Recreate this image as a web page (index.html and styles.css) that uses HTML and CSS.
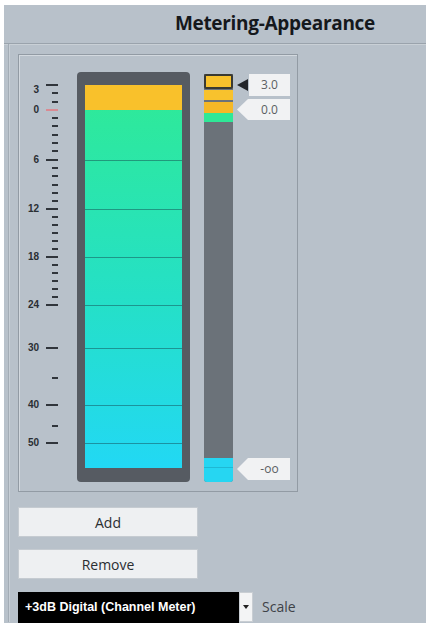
FILE: index.html
```html
<!DOCTYPE html>
<html lang="en">
  <head>
    <meta charset="UTF-8" />
    <meta name="viewport" content="width=device-width, initial-scale=1.0" />
    <title>Metering-Appearance</title>
    <link rel="stylesheet" href="styles.css">
  </head>
  <body>
    <div class="app">
      <div class="title">Metering-Appearance</div>
      <div class="content">
        <div class="frame">
          <div class="scale" id="scale"></div>
          <div class="meter">
            <div class="fill" id="fill">
              <div class="fill-top"></div>
            </div>
          </div>
          <div class="strip">
            <div class="seg seg-peak"></div>
            <div class="seg seg-yellow"></div>
            <div class="seg seg-orange"></div>
            <div class="seg seg-green"></div>
            <div class="seg-empty"></div>
            <div class="seg seg-cyan"></div>
          </div>
          <div class="tags">
            <div class="tag tag-first">
              <span class="pointer"></span>
              <span class="tag-box">3.0</span>
            </div>
            <div class="tag tag-arrow">0.0</div>
            <div class="tag tag-arrow tag-bottom">-oo</div>
          </div>
        </div>
        <button class="btn btn-add" type="button">Add</button>
        <button class="btn" type="button">Remove</button>
        <div class="select-row">
          <div class="select">+3dB Digital (Channel Meter)</div>
          <div class="select-arrow"><span></span></div>
          <span class="select-label">Scale</span>
        </div>
      </div>
    </div>
    <script>
// tick positions in px from the top of the scale column
const ticks = [
  { y: 30, major: true, label: "3", labelY: 35 },
  { y: 38 }, { y: 47 },
  { y: 55, major: true, label: "0", red: true },
  { y: 63 }, { y: 71 }, { y: 80 }, { y: 88 }, { y: 96 },
  { y: 105, major: true, label: "6" },
  { y: 113 }, { y: 121 }, { y: 130 }, { y: 138 }, { y: 146 },
  { y: 154, major: true, label: "12" },
  { y: 162 }, { y: 170 }, { y: 178 }, { y: 186 }, { y: 194 },
  { y: 202, major: true, label: "18" },
  { y: 210 }, { y: 218 }, { y: 226 }, { y: 234 }, { y: 242 },
  { y: 250, major: true, label: "24" },
  { y: 293, major: true, label: "30" },
  { y: 323 },
  { y: 350, major: true, label: "40" },
  { y: 371 },
  { y: 388, major: true, label: "50" }
];

const scale = document.getElementById("scale");
ticks.forEach((t) => {
  const tick = document.createElement("div");
  tick.className = "tick" + (t.major ? " major" : "") + (t.red ? " red" : "");
  tick.style.top = t.y + "px";
  scale.appendChild(tick);
  if (t.label) {
    const lab = document.createElement("div");
    lab.className = "tick-label";
    lab.textContent = t.label;
    lab.style.top = (t.labelY || t.y) + "px";
    scale.appendChild(lab);
  }
});

// horizontal lines in the meter, px from the top of the fill
const lines = [75, 124, 172, 220, 263, 320, 358];
const fill = document.getElementById("fill");
lines.forEach((y) => {
  const line = document.createElement("div");
  line.className = "fill-line";
  line.style.top = y + "px";
  fill.appendChild(line);
});
    </script>
  </body>
</html>
```

FILE: styles.css
```css
body {
  margin: 0;
  padding: 0;
  background: #fff;
  height: 623px;
  overflow: hidden;
}

.app {
  margin: 5px 0 0 4px;
  height: 618px;
  background: #b8c1ca;
  font-family: "Open Sans", "Liberation Sans", sans-serif;
}

.title {
  height: 39px;
  box-sizing: border-box;
  padding: 5px 51px 0 0;
  text-align: right;
  font-size: 19px;
  font-weight: 700;
  color: #15181c;
  letter-spacing: -0.3px;
  border-bottom: 1px solid #9aa3ac;
  box-shadow: 0 1px 0 #c9d0d6;
}

.content {
  margin-left: 4px;
  height: 578px;
  border-left: 1px solid #a3acb5;
  box-shadow: inset 1px 0 0 #c8cfd6;
  padding: 10px 0 0 9px;
  box-sizing: border-box;
}

.frame {
  width: 280px;
  height: 438px;
  box-sizing: border-box;
  border: 1px solid #929ba4;
  box-shadow: inset 1px 1px 0 #d3d9df;
  display: flex;
  padding-top: 17px;
}

/* scale */
.scale {
  position: relative;
  width: 58px;
  margin-top: -17px;
}
.tick {
  position: absolute;
  left: 33px;
  width: 6px;
  height: 2px;
  margin-top: -1px;
  background: #30353b;
}
.tick.major {
  left: 27px;
  width: 12px;
}
.tick.red {
  background: #d98a92;
}
.tick-label {
  position: absolute;
  left: 0;
  width: 20px;
  text-align: right;
  font-family: "Liberation Sans", sans-serif;
  font-weight: 700;
  font-size: 10px;
  line-height: 10px;
  margin-top: -5px;
  color: #2a2e33;
}

/* big meter */
.meter {
  width: 113px;
  height: 410px;
  box-sizing: border-box;
  padding: 13px 8px 14px;
  background: #565b62;
  border-radius: 4px;
}
.fill {
  position: relative;
  height: 100%;
  background: linear-gradient(#2fea96, #25e0c6 55%, #22d8f4);
}
.fill-top {
  height: 25px;
  background: #f9c12b;
}
.fill-line {
  position: absolute;
  left: 0;
  right: 0;
  height: 1px;
  background: rgba(20, 60, 70, 0.45);
}

/* small strip */
.strip {
  width: 29px;
  height: 408px;
  margin: 2px 0 0 14px;
  background: #6b7279;
  display: flex;
  flex-direction: column;
  border-radius: 0 0 3px 3px;
  overflow: hidden;
}
.seg {
  flex: none;
}
.seg-peak {
  height: 15px;
  box-sizing: border-box;
  border: 2px solid #3a3a32;
  border-radius: 2px;
  background: #f8c22d;
}
.seg-yellow {
  height: 10px;
  margin-top: 1px;
  background: #f8c22d;
}
.seg-orange {
  height: 11px;
  margin-top: 2px;
  background: #f5b826;
}
.seg-green {
  height: 9px;
  background: #2fe897;
}
.seg-empty {
  flex: 1;
}
.seg-cyan {
  height: 24px;
  background: linear-gradient(#26d6f2 0 9px, #1fb9d4 9px 10px, #26d6f2 10px);
}

/* value tags */
.tags {
  position: relative;
  width: 53px;
  margin-left: 4px;
}
.tag {
  position: absolute;
  left: 0;
  width: 53px;
  height: 21px;
  font-size: 12px;
  line-height: 21px;
  color: #5a5e62;
}
.tag-first {
  top: 2px;
  height: 22px;
  display: flex;
  align-items: center;
}
.pointer {
  width: 0;
  height: 0;
  border-top: 6px solid transparent;
  border-bottom: 6px solid transparent;
  border-right: 11px solid #23262a;
  margin-right: 1px;
}
.tag-box {
  width: 41px;
  height: 22px;
  line-height: 22px;
  background: #f1f2f3;
  text-align: center;
}
.tag-arrow {
  top: 27px;
  background: #f1f2f3;
  clip-path: polygon(11px 0, 100% 0, 100% 100%, 11px 100%, 0 50%);
  box-sizing: border-box;
  padding-left: 12px;
  text-align: center;
}
.tag-bottom {
  top: 386px;
  height: 22px;
  line-height: 22px;
}

/* buttons */
.btn {
  display: block;
  width: 180px;
  height: 30px;
  margin-top: 12px;
  padding: 0;
  border: 1px solid #c5cbd1;
  background: #eef0f2;
  font-family: "Open Sans", "Liberation Sans", sans-serif;
  font-size: 14px;
  color: #2b2e31;
}
.btn-add {
  margin-top: 15px;
}

.select-row {
  display: flex;
  align-items: stretch;
  margin-top: 13px;
  height: 32px;
}
.select {
  width: 221px;
  background: #000;
  color: #fff;
  font-family: "Liberation Sans", sans-serif;
  font-weight: 700;
  font-size: 12.5px;
  line-height: 30px;
  padding-left: 7px;
  box-sizing: border-box;
  white-space: nowrap;
}
.select-arrow {
  width: 14px;
  background: #f3f4f5;
  border: 1px solid #c9ced3;
  box-sizing: border-box;
  display: flex;
  align-items: center;
  justify-content: center;
  height: 30px;
}
.select-arrow span {
  width: 0;
  height: 0;
  border-left: 3px solid transparent;
  border-right: 3px solid transparent;
  border-top: 4px solid #222;
}
.select-label {
  margin-left: 9px;
  font-size: 14px;
  line-height: 30px;
  color: #3e4247;
}
```
